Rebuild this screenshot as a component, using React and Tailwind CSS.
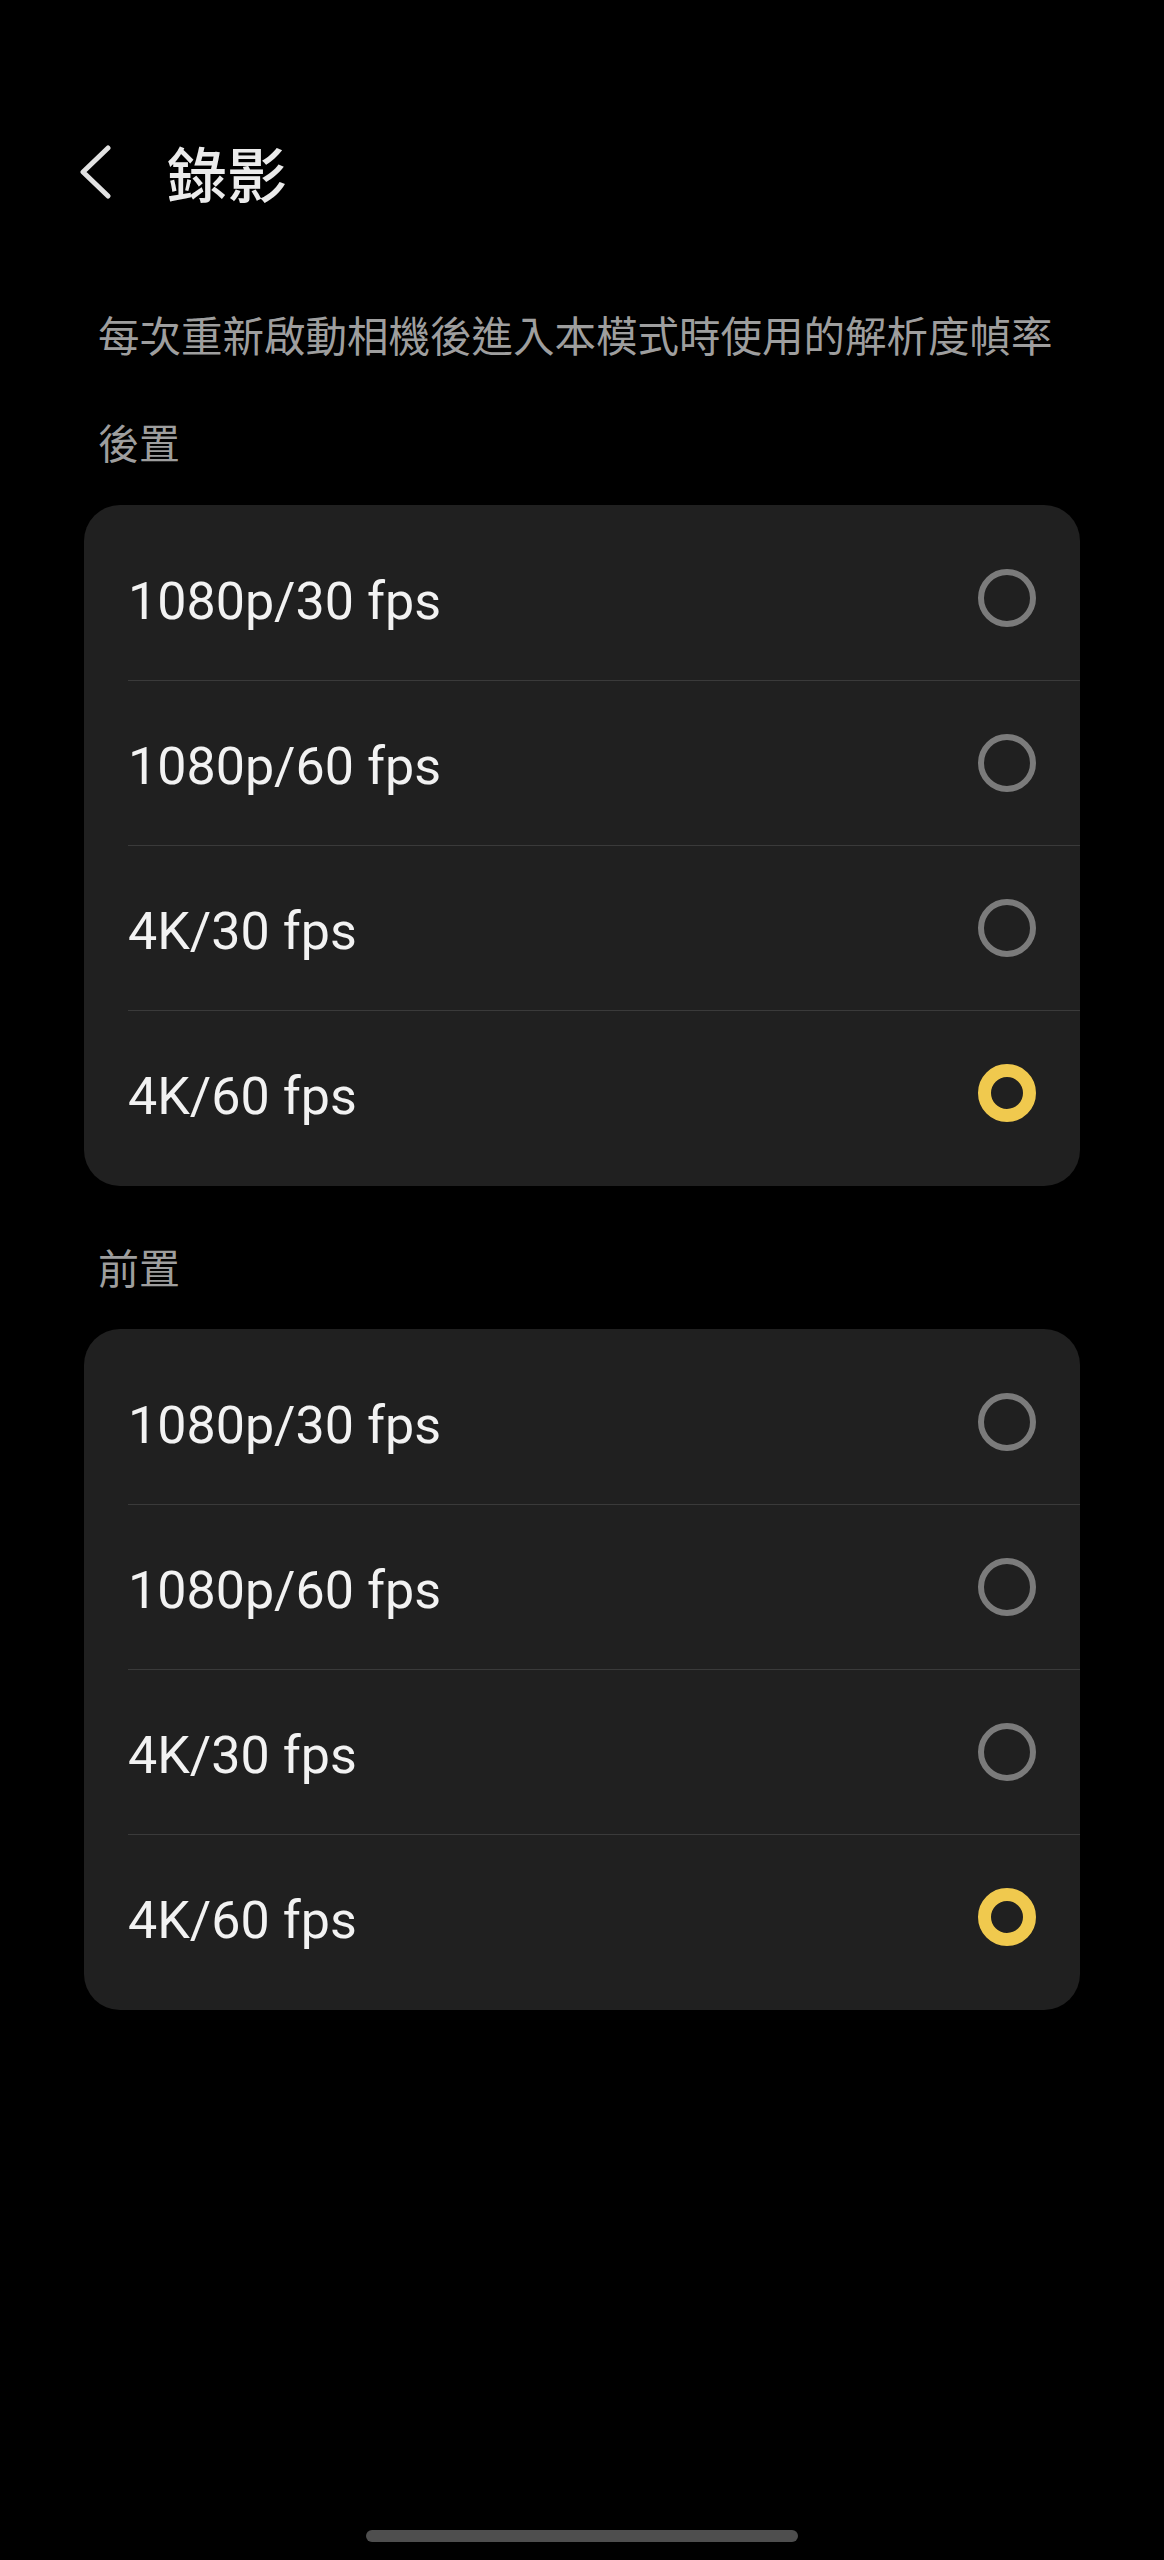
import React from 'react';

const options = ['1080p/30 fps', '1080p/60 fps', '4K/30 fps', '4K/60 fps'];

function Radio({ checked }) {
  // selected = thick yellow ring, otherwise thin grey outline
  if (checked) {
    return <div className="w-[58px] h-[58px] rounded-full border-[13px] border-[#f0c94e] shrink-0" />;
  }
  return <div className="w-[58px] h-[58px] rounded-full border-[6px] border-[#7b7b7b] shrink-0" />;
}

function OptionCard({ selected }) {
  return (
    <div className="mx-[84px] bg-[#202020] rounded-[36px] py-[11px]">
      {options.map((label, i) => (
        <div key={label}>
          {i > 0 && <div className="ml-[44px] h-px bg-[#3a3a3a]" />}
          <div className="ml-[44px] pr-[44px] h-[164px] flex items-center justify-between">
            <span className="mt-[8px] text-[52px] leading-none text-[#f2f2f2]">{label}</span>
            <Radio checked={i === selected} />
          </div>
        </div>
      ))}
    </div>
  );
}

export default function App() {
  return (
    <div className="h-[2560px] bg-black flex flex-col font-['Roboto','Noto_Sans_CJK_TC',sans-serif]">
      {/* header */}
      <div className="pt-[124px] h-[220px] flex items-center pl-[79px]">
        <svg width="32" height="54" viewBox="0 0 32 54" fill="none">
          <polyline points="29,3 4,27 29,51" stroke="#e2e2e2" strokeWidth="5" strokeLinecap="round" strokeLinejoin="round" />
        </svg>
        <h1 className="ml-[56px] text-[60px] leading-none font-medium text-[#ebebeb] font-['Noto_Sans_CJK_TC',sans-serif]">錄影</h1>
      </div>

      <p className="mt-[89px] pl-[98px] text-[41.5px] leading-[50px] text-[#9e9e9e] font-['Noto_Sans_CJK_TC',sans-serif]">
        每次重新啟動相機後進入本模式時使用的解析度幀率
      </p>

      <div className="mt-[57px] pl-[98px] text-[41px] leading-[50px] text-[#9e9e9e] font-['Noto_Sans_CJK_TC',sans-serif]">後置</div>
      <div className="mt-[39px]">
        <OptionCard selected={3} />
      </div>

      <div className="mt-[55px] pl-[98px] text-[41px] leading-[50px] text-[#9e9e9e] font-['Noto_Sans_CJK_TC',sans-serif]">前置</div>
      <div className="mt-[38px]">
        <OptionCard selected={3} />
      </div>

      {/* gesture bar */}
      <div className="mt-auto mb-[18px] mx-auto w-[432px] h-[12px] rounded-full bg-[#4e4e4e]" />
    </div>
  );
}
